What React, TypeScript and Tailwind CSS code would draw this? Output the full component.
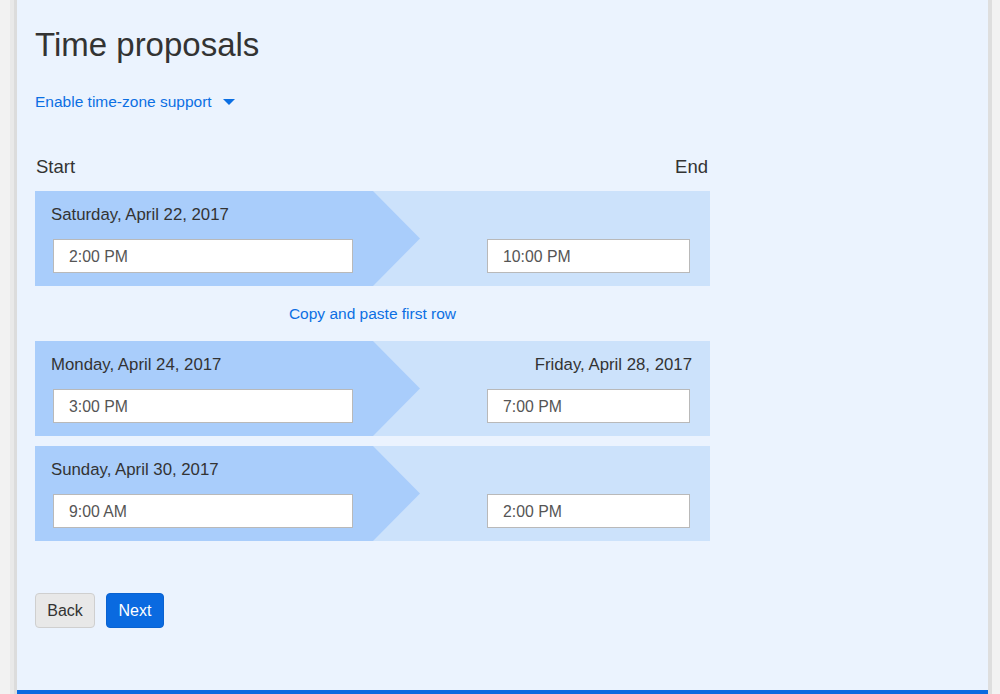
import React from "react";

type Row = { start: string; end?: string; startTime: string; endTime: string };

const rows: Row[] = [
  { start: "Saturday, April 22, 2017", startTime: "2:00 PM", endTime: "10:00 PM" },
  { start: "Monday, April 24, 2017", end: "Friday, April 28, 2017", startTime: "3:00 PM", endTime: "7:00 PM" },
  { start: "Sunday, April 30, 2017", startTime: "9:00 AM", endTime: "2:00 PM" },
];

function ProposalRow({ r }: { r: Row }) {
  return (
    <div className="relative h-[95px] w-[675px] bg-[#cce2fb]">
      <div
        className="absolute inset-y-0 left-0 w-[385px] bg-[#a9cdfb]"
        style={{ clipPath: "polygon(0 0, 338px 0, 385px 50%, 338px 100%, 0 100%)" }}
      />
      <div className="relative flex h-full justify-between">
        <div className="flex w-[340px] flex-col pl-[18px] pt-[14px]">
          <div className="h-[20px] text-[16.8px] leading-[20px] text-[#333] -ml-[2px]">{r.start}</div>
          <div className="mt-[14px] flex h-[34px] w-[300px] items-center border border-[#b9b9b9] bg-white pl-[15px] pt-[2px] text-[15.8px] text-[#555]">
            {r.startTime}
          </div>
        </div>
        <div className="flex w-[203px] flex-col items-end pr-[20px] pt-[14px] box-content">
          <div className="h-[20px] text-[16.8px] leading-[20px] text-[#333] -mr-[2px]">{r.end ?? ""}</div>
          <div className="mt-[14px] flex h-[34px] w-[203px] items-center border border-[#b9b9b9] bg-white pl-[15px] pt-[2px] text-[15.8px] text-[#555]">
            {r.endTime}
          </div>
        </div>
      </div>
    </div>
  );
}

export default function App() {
  return (
    <div
      className="flex h-[694px] w-[1000px] overflow-hidden bg-[#f2f2f2]"
      style={{ fontFamily: '"Liberation Sans", Arial, sans-serif' }}
    >
      <div className="w-[10px] bg-[#f2f2f2]" />
      <div className="w-[4px] bg-[#e9e9e9]" />
      <div className="w-[3px] bg-[#dcdcdc]" />
      <div className="flex w-[971px] flex-col bg-[#ebf3fe]">
        <div className="flex-1 pl-[18px] pt-[26px]">
          <h1 className="text-[33px] leading-[38px] text-[#333]">Time proposals</h1>
          <div className="mt-[28px] flex items-center text-[15.5px] leading-[20px] text-[#0b6fe3]">
            <span>Enable time-zone support</span>
            <svg width="12" height="7" viewBox="0 0 12 7" className="ml-[11px]">
              <polygon points="0,0 12,0 6,6" fill="#0b6fe3" />
            </svg>
          </div>
          <div className="mt-[43px] flex w-[675px] justify-between text-[18.5px] leading-[24px] text-[#333]">
            <span className="ml-[1px]">Start</span>
            <span className="mr-[2px]">End</span>
          </div>
          <div className="mt-[12px]">
            <ProposalRow r={rows[0]} />
          </div>
          <div className="flex h-[55px] w-[675px] items-center justify-center text-[15.5px] text-[#0b6fe3]">
            Copy and paste first row
          </div>
          <ProposalRow r={rows[1]} />
          <div className="mt-[10px]">
            <ProposalRow r={rows[2]} />
          </div>
          <div className="mt-[52px] flex gap-[11px]">
            <button className="h-[35px] w-[60px] rounded-[4px] border border-[#cfcfcf] bg-[#e8e8e8] text-[16px] text-[#333]">
              Back
            </button>
            <button className="h-[35px] w-[58px] rounded-[4px] border border-[#0a62d0] bg-[#0a6ae0] text-[16px] text-white">
              Next
            </button>
          </div>
        </div>
        <div className="h-[4px] bg-[#0a6ae0]" />
      </div>
      <div className="w-[4px] bg-[#dedede]" />
      <div className="flex-1 bg-[#f2f2f2]" />
    </div>
  );
}
